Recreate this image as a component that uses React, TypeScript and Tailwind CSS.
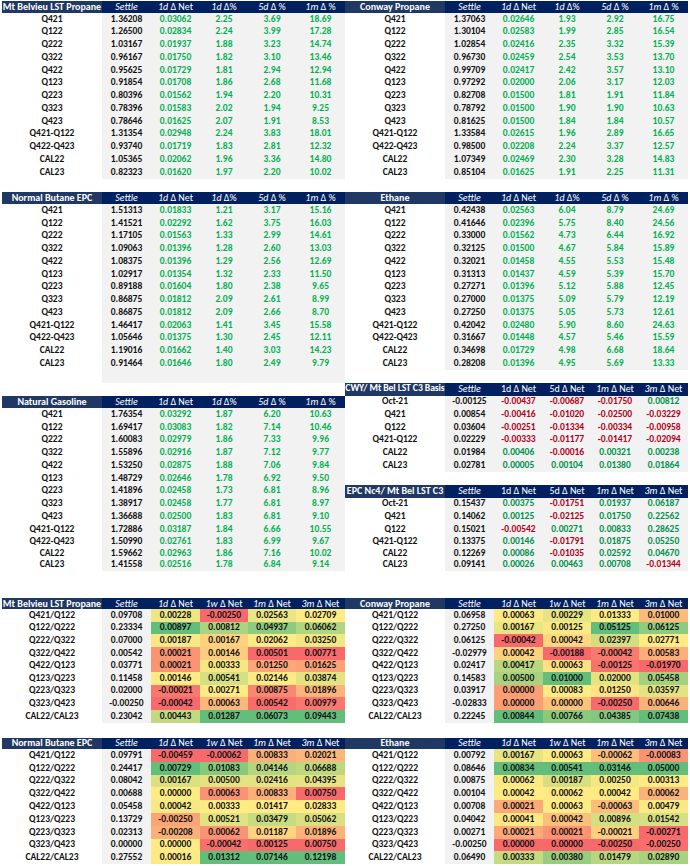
import type { ReactNode } from "react"

type Head = { em?: string; text?: string }
type Tone = "gain" | "signed" | "heat"

const GRID = "grid grid-cols-[100px_49px_49px_48px_48px_49px]"

const pctHeads: Head[] = [
  { em: "Settle" },
  { em: "1d", text: " Δ Net" },
  { em: "1d", text: " Δ%" },
  { em: "5d", text: " Δ %" },
  { em: "1m", text: " Δ %" }
]

const basisHeads: Head[] = [
  { em: "Settle" },
  { text: "1d Δ Net" },
  { text: "5d Δ Net" },
  { em: "1m", text: " Δ Net" },
  { em: "3m", text: " Δ Net" }
]

const spreadHeads: Head[] = [
  { em: "Settle" },
  { em: "1d", text: " Δ Net" },
  { em: "1w", text: " Δ Net" },
  { em: "1m", text: " Δ Net" },
  { em: "3m", text: " Δ Net" }
]

const mtBelvieu = [
  ["Q421", "1.36208", "0.03062", "2.25", "3.69", "18.69"],
  ["Q122", "1.26500", "0.02834", "2.24", "3.99", "17.28"],
  ["Q222", "1.03167", "0.01937", "1.88", "3.23", "14.74"],
  ["Q322", "0.96167", "0.01750", "1.82", "3.10", "13.46"],
  ["Q422", "0.95625", "0.01729", "1.81", "2.94", "12.94"],
  ["Q123", "0.91854", "0.01708", "1.86", "2.68", "11.68"],
  ["Q223", "0.80396", "0.01562", "1.94", "2.20", "10.31"],
  ["Q323", "0.78396", "0.01583", "2.02", "1.94", "9.25"],
  ["Q423", "0.78646", "0.01625", "2.07", "1.91", "8.53"],
  ["Q421-Q122", "1.31354", "0.02948", "2.24", "3.83", "18.01"],
  ["Q422-Q423", "0.93740", "0.01719", "1.83", "2.81", "12.32"],
  ["CAL22", "1.05365", "0.02062", "1.96", "3.36", "14.80"],
  ["CAL23", "0.82323", "0.01620", "1.97", "2.20", "10.02"]
]

const conway = [
  ["Q421", "1.37063", "0.02646", "1.93", "2.92", "16.75"],
  ["Q122", "1.30104", "0.02583", "1.99", "2.85", "16.54"],
  ["Q222", "1.02854", "0.02416", "2.35", "3.32", "15.39"],
  ["Q322", "0.96730", "0.02459", "2.54", "3.53", "13.70"],
  ["Q422", "0.99709", "0.02417", "2.42", "3.57", "13.10"],
  ["Q123", "0.97292", "0.02000", "2.06", "3.17", "12.03"],
  ["Q223", "0.82708", "0.01500", "1.81", "1.91", "11.84"],
  ["Q323", "0.78792", "0.01500", "1.90", "1.90", "10.63"],
  ["Q423", "0.81625", "0.01500", "1.84", "1.84", "10.57"],
  ["Q421-Q122", "1.33584", "0.02615", "1.96", "2.89", "16.65"],
  ["Q422-Q423", "0.98500", "0.02208", "2.24", "3.37", "12.57"],
  ["CAL22", "1.07349", "0.02469", "2.30", "3.28", "14.83"],
  ["CAL23", "0.85104", "0.01625", "1.91", "2.25", "11.31"]
]

const butane = [
  ["Q421", "1.51313", "0.01833", "1.21", "3.17", "15.16"],
  ["Q122", "1.41521", "0.02292", "1.62", "3.75", "16.03"],
  ["Q222", "1.17105", "0.01563", "1.33", "2.99", "14.61"],
  ["Q322", "1.09063", "0.01396", "1.28", "2.60", "13.03"],
  ["Q422", "1.08375", "0.01396", "1.29", "2.56", "12.69"],
  ["Q123", "1.02917", "0.01354", "1.32", "2.33", "11.50"],
  ["Q223", "0.89188", "0.01604", "1.80", "2.38", "9.65"],
  ["Q323", "0.86875", "0.01812", "2.09", "2.61", "8.99"],
  ["Q423", "0.86875", "0.01812", "2.09", "2.66", "8.70"],
  ["Q421-Q122", "1.46417", "0.02063", "1.41", "3.45", "15.58"],
  ["Q422-Q423", "1.05646", "0.01375", "1.30", "2.45", "12.11"],
  ["CAL22", "1.19016", "0.01662", "1.40", "3.03", "14.23"],
  ["CAL23", "0.91464", "0.01646", "1.80", "2.49", "9.79"]
]

const ethane = [
  ["Q421", "0.42438", "0.02563", "6.04", "8.79", "24.69"],
  ["Q122", "0.41646", "0.02396", "5.75", "8.40", "24.56"],
  ["Q222", "0.33000", "0.01562", "4.73", "6.44", "16.92"],
  ["Q322", "0.32125", "0.01500", "4.67", "5.84", "15.89"],
  ["Q422", "0.32021", "0.01458", "4.55", "5.53", "15.48"],
  ["Q123", "0.31313", "0.01437", "4.59", "5.39", "15.70"],
  ["Q223", "0.27271", "0.01396", "5.12", "5.88", "12.45"],
  ["Q323", "0.27000", "0.01375", "5.09", "5.79", "12.19"],
  ["Q423", "0.27250", "0.01375", "5.05", "5.73", "12.61"],
  ["Q421-Q122", "0.42042", "0.02480", "5.90", "8.60", "24.63"],
  ["Q422-Q423", "0.31667", "0.01448", "4.57", "5.46", "15.59"],
  ["CAL22", "0.34698", "0.01729", "4.98", "6.68", "18.64"],
  ["CAL23", "0.28208", "0.01396", "4.95", "5.69", "13.33"]
]

const gasoline = [
  ["Q421", "1.76354", "0.03292", "1.87", "6.20", "10.63"],
  ["Q122", "1.69417", "0.03083", "1.82", "7.14", "10.46"],
  ["Q222", "1.60083", "0.02979", "1.86", "7.33", "9.96"],
  ["Q322", "1.55896", "0.02916", "1.87", "7.12", "9.77"],
  ["Q422", "1.53250", "0.02875", "1.88", "7.06", "9.84"],
  ["Q123", "1.48729", "0.02646", "1.78", "6.92", "9.50"],
  ["Q223", "1.41896", "0.02458", "1.73", "6.81", "8.96"],
  ["Q323", "1.38917", "0.02458", "1.77", "6.81", "8.97"],
  ["Q423", "1.36688", "0.02500", "1.83", "6.81", "9.10"],
  ["Q421-Q122", "1.72886", "0.03187", "1.84", "6.66", "10.55"],
  ["Q422-Q423", "1.50990", "0.02761", "1.83", "6.99", "9.67"],
  ["CAL22", "1.59662", "0.02963", "1.86", "7.16", "10.02"],
  ["CAL23", "1.41558", "0.02516", "1.78", "6.84", "9.14"]
]

const cwyBasis = [
  ["Oct-21", "-0.00125", "-0.00437", "-0.00687", "-0.01750", "0.00812"],
  ["Q421", "0.00854", "-0.00416", "-0.01020", "-0.02500", "-0.03229"],
  ["Q122", "0.03604", "-0.00251", "-0.01334", "-0.00334", "-0.00958"],
  ["Q421-Q122", "0.02229", "-0.00333", "-0.01177", "-0.01417", "-0.02094"],
  ["CAL22", "0.01984", "0.00406", "-0.00016", "0.00321", "0.00238"],
  ["CAL23", "0.02781", "0.00005", "0.00104", "0.01380", "0.01864"]
]

const epcBasis = [
  ["Oct-21", "0.15437", "0.00375", "-0.01751", "0.01937", "0.06187"],
  ["Q421", "0.14062", "0.00125", "-0.02125", "0.01750", "0.22562"],
  ["Q122", "0.15021", "-0.00542", "0.00271", "0.00833", "0.28625"],
  ["Q421-Q122", "0.13375", "0.00146", "-0.01791", "0.01875", "0.05250"],
  ["CAL22", "0.12269", "0.00086", "-0.01035", "0.02592", "0.04670"],
  ["CAL23", "0.09141", "0.00026", "0.00463", "0.00708", "-0.01344"]
]

const mtBelvieuSpreads = [
  ["Q421/Q122", "0.09708", "0.00228", "-0.00250", "0.02563", "0.02709"],
  ["Q122/Q222", "0.23334", "0.00897", "0.00812", "0.04937", "0.06062"],
  ["Q222/Q322", "0.07000", "0.00187", "0.00167", "0.02062", "0.03250"],
  ["Q322/Q422", "0.00542", "0.00021", "0.00146", "0.00501", "0.00771"],
  ["Q422/Q123", "0.03771", "0.00021", "0.00333", "0.01250", "0.01625"],
  ["Q123/Q223", "0.11458", "0.00146", "0.00541", "0.02146", "0.03874"],
  ["Q223/Q323", "0.02000", "-0.00021", "0.00271", "0.00875", "0.01896"],
  ["Q323/Q423", "-0.00250", "-0.00042", "0.00063", "0.00542", "0.00979"],
  ["CAL22/CAL23", "0.23042", "0.00443", "0.01287", "0.06073", "0.09443"]
]

const conwaySpreads = [
  ["Q421/Q122", "0.06958", "0.00063", "0.00229", "0.01333", "0.01000"],
  ["Q122/Q222", "0.27250", "0.00167", "0.00125", "0.05125", "0.06125"],
  ["Q222/Q322", "0.06125", "-0.00042", "0.00042", "0.02397", "0.02771"],
  ["Q322/Q422", "-0.02979", "0.00042", "-0.00188", "-0.00042", "0.00583"],
  ["Q422/Q123", "0.02417", "0.00417", "0.00063", "-0.00125", "-0.01970"],
  ["Q123/Q223", "0.14583", "0.00500", "0.01000", "0.02000", "0.05458"],
  ["Q223/Q323", "0.03917", "0.00000", "0.00083", "0.01250", "0.03597"],
  ["Q323/Q423", "-0.02833", "0.00000", "0.00000", "-0.00250", "0.00646"],
  ["CAL22/CAL23", "0.22245", "0.00844", "0.00766", "0.04385", "0.07438"]
]

const butaneSpreads = [
  ["Q421/Q122", "0.09791", "-0.00459", "-0.00062", "0.00833", "0.02021"],
  ["Q122/Q222", "0.24417", "0.00729", "0.01083", "0.04146", "0.06688"],
  ["Q222/Q322", "0.08042", "0.00167", "0.00500", "0.02416", "0.04395"],
  ["Q322/Q422", "0.00688", "0.00000", "0.00063", "0.00833", "0.00750"],
  ["Q422/Q123", "0.05458", "0.00042", "0.00333", "0.01417", "0.02833"],
  ["Q123/Q223", "0.13729", "-0.00250", "0.00521", "0.03479", "0.05062"],
  ["Q223/Q323", "0.02313", "-0.00208", "0.00062", "0.01187", "0.01896"],
  ["Q323/Q423", "0.00000", "0.00000", "-0.00042", "0.00125", "0.00750"],
  ["CAL22/CAL23", "0.27552", "0.00016", "0.01312", "0.07146", "0.12198"]
]

const ethaneSpreads = [
  ["Q421/Q122", "0.00792", "0.00167", "0.00063", "-0.00062", "-0.00083"],
  ["Q122/Q222", "0.08646", "0.00834", "0.00541", "0.03146", "0.05000"],
  ["Q222/Q322", "0.00875", "0.00062", "0.00187", "0.00250", "0.00313"],
  ["Q322/Q422", "0.00104", "0.00042", "0.00062", "0.00042", "0.00062"],
  ["Q422/Q123", "0.00708", "0.00021", "0.00063", "-0.00063", "0.00479"],
  ["Q123/Q223", "0.04042", "0.00041", "0.00042", "0.00896", "0.01542"],
  ["Q223/Q323", "0.00271", "0.00021", "0.00021", "-0.00021", "-0.00271"],
  ["Q323/Q423", "-0.00250", "0.00000", "0.00000", "-0.00250", "-0.00250"],
  ["CAL22/CAL23", "0.06490", "0.00333", "0.00380", "0.01479", "0.02890"]
]

// excel-style 3 colour scale: min red, 50th percentile yellow, max green
const RED = [248, 105, 107]
const YELLOW = [255, 235, 132]
const GREEN = [99, 190, 123]

function mix(a: number[], b: number[], t: number) {
  return a.map((v, i) => Math.round(v + (b[i] - v) * t))
}

function colourScale(values: number[]) {
  const s = [...values].sort((a, b) => a - b)
  const min = s[0]
  const max = s[s.length - 1]
  const pos = (s.length - 1) / 2
  const lo = Math.floor(pos)
  const mid = s[lo] + (s[Math.ceil(pos)] - s[lo]) * (pos - lo)
  return (v: number) => {
    const c =
      v <= mid
        ? mix(RED, YELLOW, mid === min ? 1 : (v - min) / (mid - min))
        : mix(YELLOW, GREEN, max === mid ? 0 : (v - mid) / (max - mid))
    return `rgb(${c.join(",")})`
  }
}

function HeadLabel({ head }: { head: Head }) {
  return (
    <span className="whitespace-pre">
      {head.em ? <i>{head.em}</i> : null}
      {head.text}
    </span>
  )
}

function Header({ title, heads, h, tight }: { title: string; heads: Head[]; h: string; tight?: boolean }) {
  return (
    <div className={`${GRID} ${h} text-[10px] text-white`}>
      <div
        className={`flex items-center justify-center overflow-hidden whitespace-nowrap bg-[#203864] font-semibold ${
          tight ? "text-[9.7px] tracking-[-0.1px]" : ""
        }`}
      >
        {title}
      </div>
      {heads.map((hd, i) => (
        <div key={i} className="flex items-center justify-center bg-[#002060]">
          <HeadLabel head={hd} />
        </div>
      ))}
    </div>
  )
}

function Cell({ children, className, bg }: { children?: ReactNode; className?: string; bg?: string }) {
  return (
    <div className={`flex items-center justify-center ${className ?? ""}`} style={bg ? { backgroundColor: bg } : undefined}>
      {children}
    </div>
  )
}

function DataTable({
  title,
  heads,
  rows,
  tone,
  headH,
  rowH,
  tightRow,
  blankRow,
  tightTitle
}: {
  title: string
  heads: Head[]
  rows: string[][]
  tone: Tone
  headH: string
  rowH: string
  tightRow?: number
  blankRow?: boolean
  tightTitle?: boolean
}) {
  const scales =
    tone === "heat"
      ? [2, 3, 4, 5].map((c) => colourScale(rows.map((r) => parseFloat(r[c]))))
      : []

  return (
    <div className="flex flex-col">
      <Header title={title} heads={heads} h={headH} tight={tightTitle} />
      {rows.map((row, ri) => (
        <div key={row[0]} className={`${GRID} ${ri === tightRow ? "h-[10px]" : rowH}`}>
          <Cell className="font-bold text-[#111]">{row[0]}</Cell>
          <Cell className="bg-[#f2f2f2] font-bold text-[#111]">{row[1]}</Cell>
          {row.slice(2).map((v, ci) => {
            if (tone === "heat") {
              return (
                <Cell key={ci} className="font-bold text-[#111]" bg={scales[ci](parseFloat(v))}>
                  {v}
                </Cell>
              )
            }
            if (tone === "signed") {
              return (
                <Cell
                  key={ci}
                  className={`bg-[#f2f2f2] font-semibold ${v.startsWith("-") ? "text-[#b00018]" : "text-[#00904a]"}`}
                >
                  {v}
                </Cell>
              )
            }
            return (
              <Cell key={ci} className="bg-[#f2f2f2] font-bold text-[#00b050]">
                {v}
              </Cell>
            )
          })}
        </div>
      ))}
      {blankRow ? (
        <div className={`${GRID} ${rowH}`}>
          <div />
          <div className="col-span-5 bg-[#f2f2f2]" />
        </div>
      ) : null}
    </div>
  )
}

export default function App() {
  return (
    <div className="h-[866px] w-[690px] overflow-hidden bg-white pl-[2px] pt-[1px] font-['Carlito','Calibri','Lato',sans-serif] text-[9.5px] leading-none">
      <div className="grid grid-cols-[343px_343px]">
        <div className="flex flex-col">
          <DataTable title="Mt Belvieu LST Propane" heads={pctHeads} rows={mtBelvieu} tone="gain" headH="h-[12px]" rowH="h-[12.75px]" />
          <div className="h-[13.5px]" />
          <DataTable title="Normal Butane EPC" heads={pctHeads} rows={butane} tone="gain" headH="h-[12px]" rowH="h-[12.75px]" blankRow />
          <div className="h-[12.75px]" />
          <DataTable title="Natural Gasoline" heads={pctHeads} rows={gasoline} tone="gain" headH="h-[12.75px]" rowH="h-[12.75px]" tightRow={11} />
        </div>
        <div className="flex flex-col">
          <DataTable title="Conway Propane" heads={pctHeads} rows={conway} tone="gain" headH="h-[12px]" rowH="h-[12.75px]" />
          <div className="h-[13.5px]" />
          <DataTable title="Ethane" heads={pctHeads} rows={ethane} tone="gain" headH="h-[12px]" rowH="h-[12.75px]" />
          <div className="h-[12.75px]" />
          <DataTable title="CWY/ Mt Bel LST C3 Basis" heads={basisHeads} rows={cwyBasis} tone="signed" headH="h-[12.75px]" rowH="h-[12.75px]" tightTitle />
          <div className="h-[12.75px]" />
          <DataTable title="EPC Nc4/ Mt Bel LST C3" heads={basisHeads} rows={epcBasis} tone="signed" headH="h-[12.75px]" rowH="h-[12.75px]" tightRow={4} />
        </div>
      </div>

      <div className="mt-[27px] grid grid-cols-[343px_343px]">
        <div className="flex flex-col">
          <DataTable title="Mt Belvieu LST Propane" heads={spreadHeads} rows={mtBelvieuSpreads} tone="heat" headH="h-[11px]" rowH="h-[12.6px]" />
          <div className="h-[15px]" />
          <DataTable title="Normal Butane EPC" heads={spreadHeads} rows={butaneSpreads} tone="heat" headH="h-[11.5px]" rowH="h-[12.8px]" />
        </div>
        <div className="flex flex-col">
          <DataTable title="Conway Propane" heads={spreadHeads} rows={conwaySpreads} tone="heat" headH="h-[11px]" rowH="h-[12.6px]" />
          <div className="h-[15px]" />
          <DataTable title="Ethane" heads={spreadHeads} rows={ethaneSpreads} tone="heat" headH="h-[11.5px]" rowH="h-[12.8px]" />
        </div>
      </div>
    </div>
  )
}
